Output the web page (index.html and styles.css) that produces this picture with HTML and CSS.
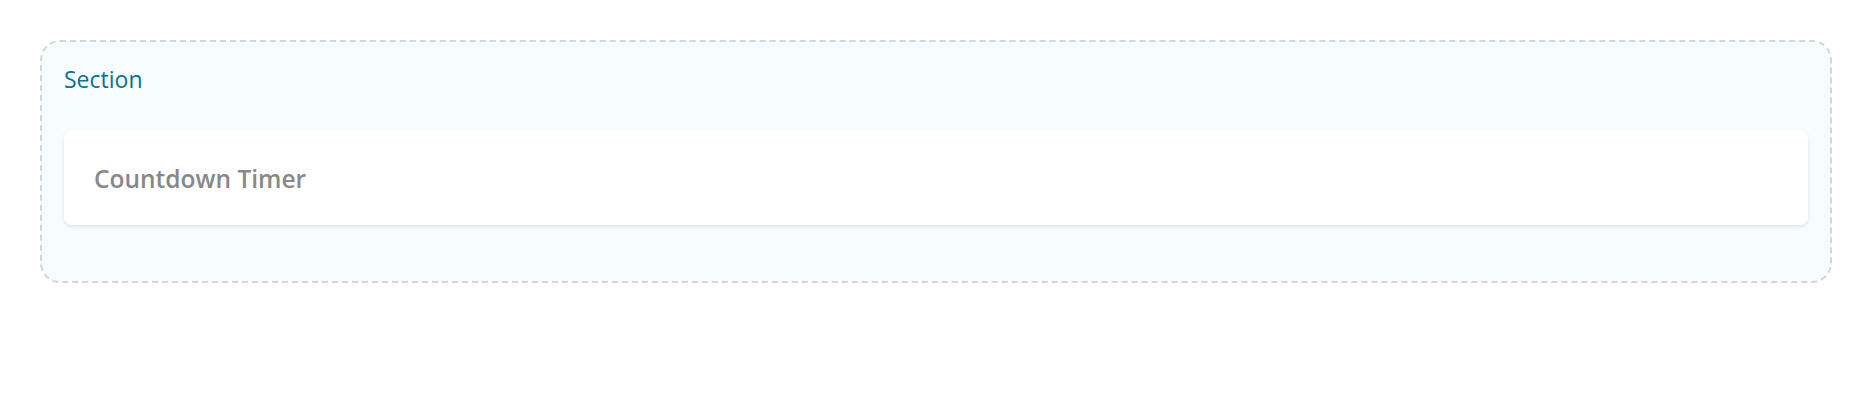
FILE: index.html
```html
<!DOCTYPE html>
<html lang="en">
<head>
<meta charset="utf-8">
<title>Section</title>
<link rel="stylesheet" href="styles.css">
</head>
<body>
  <div class="page">
    <section class="section">
      <div class="section-label">Section</div>
      <div class="card">
        <h2 class="card-title">Countdown Timer</h2>
      </div>
    </section>
  </div>
</body>
</html>
```
FILE: styles.css
```css
html, body {
  margin: 0;
  padding: 0;
  background: #ffffff;
}
body {
  font-family: "Open Sans", "Noto Sans", "Liberation Sans", sans-serif;
}
.page {
  padding: 40px;
}
.section {
  box-sizing: border-box;
  height: 243px;
  border: 2px dashed #d2d6da;
  border-radius: 20px;
  background: #f7fcfe;
  padding: 23px 22px 0 22px;
}
.section-label {
  font-size: 23px;
  line-height: 28px;
  height: 28px;
  color: #0b7196;
  margin-bottom: 37px;
}
.card {
  box-sizing: border-box;
  background: #ffffff;
  border-radius: 8px;
  box-shadow: 0 2px 4px rgba(0, 0, 0, 0.1);
  height: 95px;
  padding: 2px 30px 0 30px;
  display: flex;
  align-items: center;
}
.card-title {
  margin: 0;
  font-size: 24.5px;
  font-weight: 600;
  color: #888888;
}
```
